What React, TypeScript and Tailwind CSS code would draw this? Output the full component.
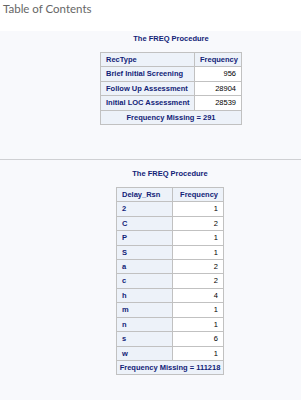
import React from 'react';

interface FreqTable {
  label: string;
  col1: number;
  col2: number;
  rows: [string, number][];
  missing: number;
}

const recType: FreqTable = {
  label: 'RecType',
  col1: 94,
  col2: 47,
  rows: [
    ['Brief Initial Screening', 956],
    ['Follow Up Assessment', 28904],
    ['Initial LOC Assessment', 28539],
  ],
  missing: 291,
};

const delayRsn: FreqTable = {
  label: 'Delay_Rsn',
  col1: 56,
  col2: 51,
  rows: [
    ['2', 1],
    ['C', 2],
    ['P', 1],
    ['S', 1],
    ['a', 2],
    ['c', 2],
    ['h', 4],
    ['m', 1],
    ['n', 1],
    ['s', 6],
    ['w', 1],
  ],
  missing: 111218,
};

const head =
  'border border-[#c1c1c1] bg-[#edf2f9] text-[#112277] font-bold py-[2px] leading-[9.4px]';

const FreqBlock: React.FC<{ t: FreqTable }> = ({ t }) => (
  <div className="flex flex-col items-center">
    <div className="text-[7.5px] leading-[9px] font-bold text-[#112277]">The FREQ Procedure</div>
    <table
      className="mt-[9px] border-collapse table-fixed bg-white text-[7.5px]"
      style={{ width: t.col1 + t.col2 + 1 }}
    >
      <colgroup>
        <col style={{ width: t.col1 }} />
        <col style={{ width: t.col2 }} />
      </colgroup>
      <thead>
        <tr>
          <th className={head + ' text-left px-[5px]'}>{t.label}</th>
          <th className={head + ' text-right px-[5px]'}>Frequency</th>
        </tr>
      </thead>
      <tbody>
        {t.rows.map(([k, v]) => (
          <tr key={k}>
            <th className={head + ' text-left px-[5px] whitespace-nowrap'}>{k}</th>
            <td className="border border-[#c1c1c1] px-[5px] py-[2px] leading-[9.4px] text-right text-black">
              {v}
            </td>
          </tr>
        ))}
        <tr>
          <th colSpan={2} className={head + ' text-center px-[2px] whitespace-nowrap'}>
            Frequency Missing = {t.missing}
          </th>
        </tr>
      </tbody>
    </table>
  </div>
);

export default function App() {
  return (
    <div className="w-[301px] h-[400px] overflow-hidden bg-[#f8f9fc] font-['Liberation_Sans',Arial,sans-serif]">
      <div className="h-[31px] bg-white px-[3px] pt-[2px]">
        <div className="font-['Lato',sans-serif] text-[11.5px] leading-[14px] text-[#666]">Table of Contents</div>
      </div>
      <div className="pl-[41px] pt-[3px] pb-[34px]">
        <FreqBlock t={recType} />
      </div>
      <div className="h-px bg-[#cfd0d3]" />
      <div className="pl-[39px] pt-[9px]">
        <FreqBlock t={delayRsn} />
      </div>
    </div>
  );
}
